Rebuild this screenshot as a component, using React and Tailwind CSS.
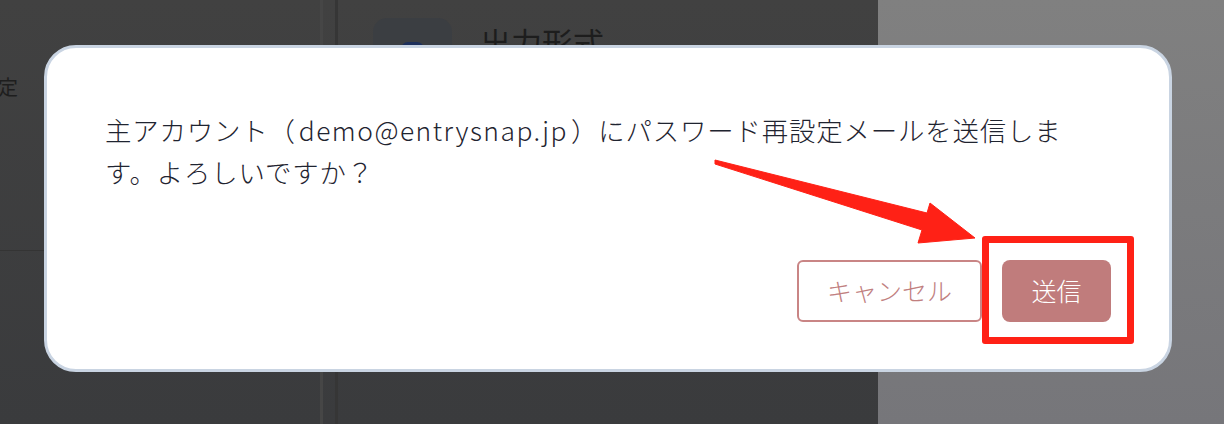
export default function App() {
  return (
    <div className="relative w-[1224px] h-[424px] overflow-hidden flex font-['Noto_Sans_CJK_JP',sans-serif]">
      {/* dimmed page behind */}
      <div className="w-[878px] h-full flex bg-linear-to-b from-[#414141] to-[#3a3b3d]">
        <aside className="w-[320px] h-full flex flex-col">
          <div className="h-[251px] pt-[75px] border-b border-[#343434]">
            <span className="block -ml-[22px] text-[20px] leading-[24px] text-[#1e1e1e]">設定</span>
          </div>
        </aside>
        <div className="w-[18px] h-full border-l-[3px] border-l-[#464646] border-r-[3px] border-r-[#363636]" />
        <main className="flex-1 flex items-start pt-[18px] pl-[35px] gap-[28px]">
          <div className="w-[79px] h-[79px] rounded-[14px] bg-[#3b3e42] flex justify-center pt-[24px]">
            <div className="w-[23px] h-[30px] rounded-t-[7px] bg-[#1d2f5b]" />
          </div>
          <h2 className="text-[31px] leading-none mt-[8px] text-[#1d1d1d]">出力形式</h2>
        </main>
      </div>
      <div className="flex-1 h-full bg-linear-to-b from-[#808080] to-[#76767a]" />

      {/* dialog */}
      <div className="absolute left-[44px] top-[45px] w-[1128px] h-[327px] bg-white border-[3px] border-[#c9d4e2] rounded-[32px] px-[58px] pt-[61px] pb-[47px] flex flex-col">
        <p className="text-[26.4px] leading-[42px] font-light tracking-[0.85px] text-[#1f2430] whitespace-nowrap">
          主アカウント（<span className="px-[3px] tracking-[1.5px]">demo@entrysnap.jp</span>）にパスワード再設定メールを送信しま
          <br />
          す。よろしいですか？
        </p>
        <div className="mt-auto flex justify-end gap-[20px]">
          <button className="w-[185px] h-[62px] rounded-[6px] border-2 border-[#c98585] text-[#c17f7f] text-[25px] font-light flex items-center justify-center">
            キャンセル
          </button>
          <button className="w-[109px] h-[62px] rounded-[8px] bg-[#c07c7c] text-white text-[25px] font-light flex items-center justify-center">
            送信
          </button>
        </div>
      </div>

      {/* annotation */}
      <div className="absolute left-[982px] top-[236px] w-[152px] h-[108px] border-[7px] border-[#ff2116] rounded-[3px]" />
      <svg className="absolute left-0 top-0 w-[1224px] h-[424px] pointer-events-none" viewBox="0 0 1224 424">
        <polygon
          points="715,160 927,213 930,203 975,238 918,243 922,230 715,164"
          fill="#ff2116"
          stroke="#ff2116"
          strokeWidth="1"
          strokeLinejoin="round"
        />
      </svg>
    </div>
  );
}
